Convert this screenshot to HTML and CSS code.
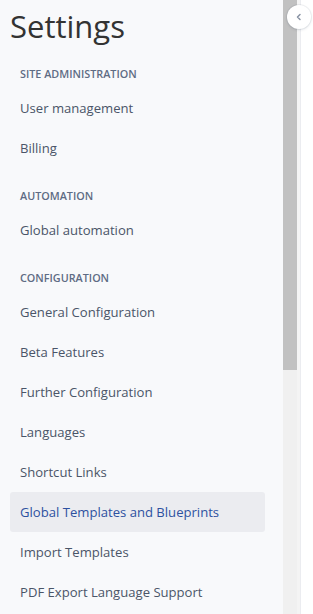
FILE: index.html
```html
<html>
	<head>
		<title>Settings</title>
		<link rel="stylesheet" href="styles.css">
	</head>
	<body>
		<div class="sidebar">
			<h1>Settings</h1>

			<div class="section first">
				<div class="heading">Site administration</div>
				<a class="item">User management</a>
				<a class="item">Billing</a>
			</div>

			<div class="section">
				<div class="heading">Automation</div>
				<a class="item">Global automation</a>
			</div>

			<div class="section">
				<div class="heading">Configuration</div>
				<a class="item">General Configuration</a>
				<a class="item">Beta Features</a>
				<a class="item">Further Configuration</a>
				<a class="item">Languages</a>
				<a class="item">Shortcut Links</a>
				<a class="item selected">Global Templates and Blueprints</a>
				<a class="item">Import Templates</a>
				<a class="item">PDF Export Language Support</a>
			</div>
		</div>

		<div class="scrollbar">
			<div class="thumb"></div>
		</div>

		<div class="main"></div>

		<button class="collapse" type="button">
			<svg width="8" height="8" viewBox="0 0 8 8">
				<path d="M5 1.5 L2.5 4 L5 6.5" fill="none" stroke="#8993a4" stroke-width="1.5" stroke-linecap="round" stroke-linejoin="round"/>
			</svg>
		</button>
	</body>
</html>
```

FILE: styles.css
```css
/* Page frame */
body {
  margin: 0;
  display: flex;
  height: 614px;
  overflow: hidden;
  font-family: "Open Sans", "Noto Sans", sans-serif;
  background: #fff;
}

/* Left navigation */
.sidebar {
  width: 283px;
  box-sizing: border-box;
  padding: 0 18px 0 10px;
  background-color: #f8f9fb;
  flex-shrink: 0;
}

h1 {
  margin: 6px 0 0 0;
  font-size: 31px;
  line-height: 40px;
  font-weight: 400;
  color: #333;
}

.section {
  margin-top: 20px;
}

.heading {
  padding-left: 10px;
  margin-bottom: 6px;
  font-size: 10.8px;
  line-height: 16px;
  font-weight: 600;
  text-transform: uppercase;
  color: #5e6c84;
}

.item {
  display: block;
  height: 40px;
  line-height: 40px;
  padding: 0 10px;
  font-size: 13.1px;
  color: #4a5568;
  border-radius: 3px;
  white-space: nowrap;
  cursor: pointer;
}

.item.selected {
  background-color: #ebecf0;
  color: #2d51a0;
}

/* Scrollbar column */
.scrollbar {
  width: 14px;
  flex-shrink: 0;
  background-color: #f0f0f0;
  border-right: 3px solid #f4f4f4;
}

.thumb {
  height: 370px;
  background-color: #c1c1c1;
}

.main {
  flex: 1;
  border-left: 1px solid #ebecf0;
}

/* Collapse toggle */
.collapse {
  position: absolute;
  left: 287px;
  top: 5px;
  width: 24px;
  height: 24px;
  padding: 0;
  border: none;
  border-radius: 50%;
  background: #fff;
  box-shadow: 0 0 0 1px rgba(9, 30, 66, 0.05), 0 1px 3px rgba(9, 30, 66, 0.12);
  display: flex;
  align-items: center;
  justify-content: center;
}
```
